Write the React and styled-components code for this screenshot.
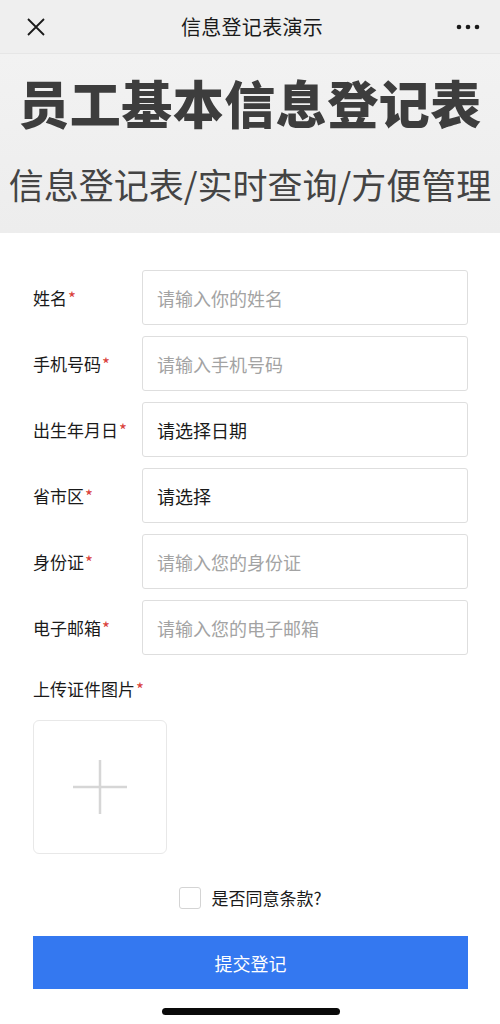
import React, { useState } from 'react';
import styled, { createGlobalStyle } from 'styled-components';

const GlobalStyle = createGlobalStyle`
  * { box-sizing: border-box; }
  body {
    margin: 0;
    background: #ffffff;
    font-family: "Noto Sans CJK SC", "Noto Sans", sans-serif;
  }
`;

const Page = styled.div`
  width: 500px;
  min-height: 1024px;
  background: #fff;
  display: flex;
  flex-direction: column;
`;

const NavBar = styled.div`
  height: 54px;
  background: #efefef;
  display: flex;
  align-items: center;
  justify-content: space-between;
  padding: 0 20px 0 24px;
  border-bottom: 1px solid #e6e6e6;
`;

const NavTitle = styled.div`
  font-size: 20px;
  color: #1a1a1a;
  letter-spacing: 0.3px;
`;

const IconButton = styled.div`
  width: 24px;
  height: 24px;
  display: flex;
  align-items: center;
  justify-content: center;
`;

const Banner = styled.div`
  height: 179px;
  background: linear-gradient(#f2f2f2, #ededed);
  display: flex;
  flex-direction: column;
  align-items: center;
  padding-top: 12px;
  color: #3d3d3d;
`;

const BannerTitle = styled.div`
  font-size: 51px;
  font-weight: 900;
  line-height: 72px;
  letter-spacing: 0.5px;
`;

const BannerSub = styled.div`
  font-size: 35px;
  font-weight: 400;
  line-height: 50px;
  margin-top: 21px;
  color: #444;
`;

const Form = styled.div`
  padding: 37px 32px 0 33px;
  display: flex;
  flex-direction: column;
`;

const Row = styled.div`
  display: flex;
  align-items: center;
  height: 55px;
  margin-bottom: 11px;
`;

const Label = styled.div`
  width: 109px;
  font-size: 17px;
  color: #1a1a1a;
`;

const Star = styled.span`
  color: #d9403a;
  margin-left: 1px;
`;

const Field = styled.div`
  flex: 1;
  height: 55px;
  border: 1px solid #dedede;
  border-radius: 3px;
  display: flex;
  align-items: center;
  padding-left: 14px;
  font-size: 18px;
  color: ${p => (p.$filled ? '#1a1a1a' : '#a3a3a3')};
`;

const UploadLabel = styled(Label)`
  width: auto;
  margin-top: 10px;
`;

const UploadBox = styled.div`
  width: 134px;
  height: 134px;
  margin-top: 19px;
  border: 1px solid #e8e8e8;
  border-radius: 6px;
  display: flex;
  align-items: center;
  justify-content: center;
`;

const AgreeRow = styled.div`
  display: flex;
  align-items: center;
  justify-content: center;
  gap: 10px;
  margin-top: 31px;
  font-size: 17px;
  color: #1a1a1a;
`;

const Check = styled.div`
  width: 22px;
  height: 22px;
  border: 1px solid #d4d4d4;
  border-radius: 3px;
  background: ${p => (p.$on ? '#3478f0' : '#fff')};
`;

const Submit = styled.div`
  margin-top: 26px;
  height: 53px;
  background: #3478f0;
  color: #fff;
  font-size: 18px;
  display: flex;
  align-items: center;
  justify-content: center;
`;

const HomeBar = styled.div`
  width: 178px;
  height: 7px;
  border-radius: 4px;
  background: #0a0a0a;
  align-self: center;
  margin-top: 19px;
`;

const fields = [
  { label: '姓名', text: '请输入你的姓名' },
  { label: '手机号码', text: '请输入手机号码' },
  { label: '出生年月日', text: '请选择日期', filled: true },
  { label: '省市区', text: '请选择', filled: true },
  { label: '身份证', text: '请输入您的身份证' },
  { label: '电子邮箱', text: '请输入您的电子邮箱' },
];

export default function App() {
  const [agree, setAgree] = useState(false);

  return (
    <Page>
      <GlobalStyle />
      <NavBar>
        <IconButton>
          <svg width="20" height="20" viewBox="0 0 20 20">
            <path d="M2 2 L18 18 M18 2 L2 18" stroke="#1a1a1a" strokeWidth="1.8" />
          </svg>
        </IconButton>
        <NavTitle>信息登记表演示</NavTitle>
        <IconButton>
          <svg width="24" height="6" viewBox="0 0 24 6">
            <circle cx="3" cy="3" r="2.3" fill="#1a1a1a" />
            <circle cx="12" cy="3" r="2.3" fill="#1a1a1a" />
            <circle cx="21" cy="3" r="2.3" fill="#1a1a1a" />
          </svg>
        </IconButton>
      </NavBar>

      <Banner>
        <BannerTitle>员工基本信息登记表</BannerTitle>
        <BannerSub>信息登记表/实时查询/方便管理</BannerSub>
      </Banner>

      <Form>
        {fields.map(f => (
          <Row key={f.label}>
            <Label>
              {f.label}
              <Star>*</Star>
            </Label>
            <Field $filled={f.filled}>{f.text}</Field>
          </Row>
        ))}

        <UploadLabel>
          上传证件图片<Star>*</Star>
        </UploadLabel>
        <UploadBox>
          <svg width="54" height="54" viewBox="0 0 54 54">
            <path d="M27 0 V54 M0 27 H54" stroke="#d6d6d6" strokeWidth="2.5" />
          </svg>
        </UploadBox>

        <AgreeRow onClick={() => setAgree(!agree)}>
          <Check $on={agree} />
          是否同意条款?
        </AgreeRow>

        <Submit>提交登记</Submit>
        <HomeBar />
      </Form>
    </Page>
  );
}
